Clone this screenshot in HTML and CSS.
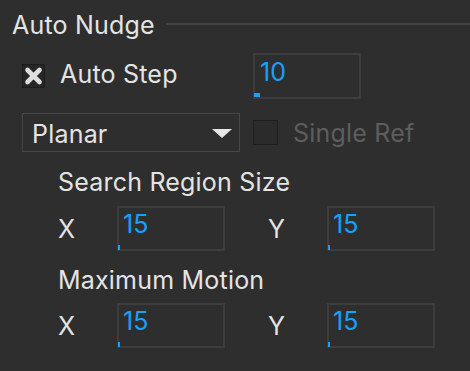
FILE: index.html
```html
<!DOCTYPE html>
<html>
<head>
<meta charset="utf-8">
<link rel="stylesheet" href="styles.css">
</head>
<body>
<div class="panel">
  <div class="legend">
    <span class="legend-text">Auto Nudge</span>
    <span class="legend-line"></span>
  </div>

  <div class="row row-step">
    <span class="check checked">
      <svg class="xmark" width="21" height="22" viewBox="0 0 21 22"><path d="M4.5 5 L16.5 17 M16.5 5 L4.5 17" stroke="#dedede" stroke-width="4.6" stroke-linecap="round"/></svg>
    </span>
    <span class="label step-label">Auto Step</span>
    <span class="field field-step"><span class="value">10</span><span class="caret caret-wide"></span></span>
  </div>

  <div class="row row-mode">
    <span class="select">
      <span class="select-text">Planar</span>
      <svg class="arrow" width="20" height="9" viewBox="0 0 20 9"><path d="M0 0 H20 L10 9 Z" fill="#e6e6e6"/></svg>
    </span>
    <span class="check disabled"></span>
    <span class="label muted">Single Ref</span>
  </div>

  <div class="section-title">Search Region Size</div>
  <div class="row xy">
    <span class="axis">X</span>
    <span class="field"><span class="value">15</span><span class="caret"></span></span>
    <span class="axis axis-y">Y</span>
    <span class="field"><span class="value">15</span><span class="caret"></span></span>
  </div>

  <div class="section-title title-2">Maximum Motion</div>
  <div class="row xy xy-2">
    <span class="axis">X</span>
    <span class="field"><span class="value">15</span><span class="caret"></span></span>
    <span class="axis axis-y">Y</span>
    <span class="field"><span class="value">15</span><span class="caret"></span></span>
  </div>
</div>
</body>
</html>
```

FILE: styles.css
```css
html, body {
  margin: 0;
  padding: 0;
  background: #2e2e2e;
}
body {
  width: 470px;
  height: 371px;
  overflow: hidden;
  font-family: Inter, "Noto Sans", sans-serif;
  font-size: 25px;
  line-height: 30px;
  letter-spacing: 0.2px;
  color: #e4e4e4;
}
.panel {
  display: flex;
  flex-direction: column;
  padding-top: 10px;
}
.legend {
  display: flex;
  align-items: center;
  height: 30px;
  padding-left: 12px;
}
.legend-line {
  flex: 1;
  height: 0;
  border-top: 2px solid #434343;
  margin-left: 11px;
  margin-bottom: 3px;
}
.row {
  display: flex;
  align-items: center;
}
.row-step {
  margin-top: 13px;
  padding-left: 22px;
  height: 46px;
}
.check {
  box-sizing: border-box;
  width: 23px;
  height: 24px;
  border: 1px solid #1c1c1c;
  background: #262626;
  display: flex;
}
.xmark {
  display: block;
  flex: none;
}
.check.disabled {
  width: 25px;
  height: 25px;
  border: 1.5px solid #1e1e1e;
  background: #2b2b2b;
}
.label {
  margin-left: 15px;
}
.step-label {
  width: 193px;
  margin-bottom: 4px;
}
.muted {
  color: #5d5d5d;
}
.field {
  position: relative;
  box-sizing: border-box;
  width: 108px;
  height: 45px;
  border: 2px solid #3d3d3d;
  padding: 1px 0 0 4px;
  align-self: center;
  display: flex;
  align-items: flex-start;
}
.field-step {
  height: 46px;
  padding: 2px 0 0 5px;
}
.value {
  color: #16a0ff;
  line-height: 30px;
}
.caret {
  position: absolute;
  left: -1px;
  bottom: -1px;
  width: 2px;
  height: 5px;
  background: #16a0ff;
}
.caret-wide {
  width: 6px;
  height: 4px;
  bottom: 0;
}
.row-mode {
  margin-top: 14px;
  padding-left: 22px;
  height: 39px;
}
.select {
  box-sizing: border-box;
  width: 218px;
  height: 39px;
  border: 1.5px solid #474747;
  padding: 0 7px 0 9px;
  display: flex;
  align-items: center;
  justify-content: space-between;
}
.select-text {
  margin-top: 2px;
}
.arrow {
  display: block;
  margin-top: 1px;
}
.row-mode .check {
  margin-left: 13px;
}
.section-title {
  margin-top: 15px;
  padding-left: 58px;
  height: 30px;
}
.title-2 {
  margin-top: 14px;
}
.xy {
  margin-top: 9px;
  padding-left: 58px;
  height: 45px;
  align-items: flex-start;
}
.xy-2 {
  margin-top: 8px;
}
.axis {
  width: 59px;
  margin-top: 8px;
}
.axis-y {
  margin-left: 43px;
}
```
